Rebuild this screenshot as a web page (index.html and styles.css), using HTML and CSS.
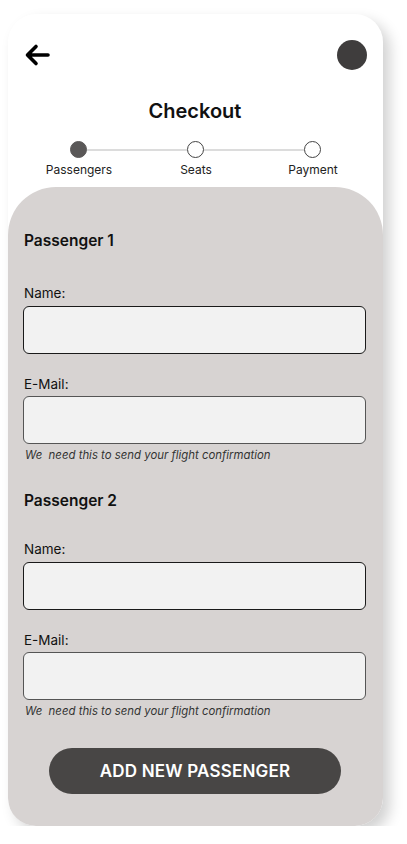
FILE: index.html
```html
<!DOCTYPE html>
<html lang="en">
<head>
  <meta charset="UTF-8" />
  <meta name="viewport" content="width=device-width, initial-scale=1.0" />
  <title>Checkout</title>
  <link rel="stylesheet" href="styles.css">
</head>
<body>
  <div class="phone">
    <div class="topbar">
      <button class="back" aria-label="Back">
        <svg width="26" height="24" viewBox="0 0 26 24">
          <path d="M24 12H4M12 3.5L3.5 12L12 20.5" fill="none" stroke="#000" stroke-width="3.6" stroke-linecap="round" stroke-linejoin="round"/>
        </svg>
      </button>
      <div class="avatar"></div>
    </div>

    <h1 class="title">Checkout</h1>

    <div class="steps">
      <span class="dot active"></span>
      <span class="line"></span>
      <span class="dot"></span>
      <span class="line"></span>
      <span class="dot"></span>
    </div>
    <div class="step-labels">
      <span>Passengers</span>
      <span>Seats</span>
      <span>Payment</span>
    </div>

    <div class="panel">
      <div class="passenger">
        <h2>Passenger 1</h2>
        <label class="field-label">Name:</label>
        <div class="input strong"></div>
        <label class="field-label gap">E-Mail:</label>
        <div class="input"></div>
        <p class="hint">We  need this to send your flight confirmation</p>
      </div>

      <div class="passenger second">
        <h2>Passenger 2</h2>
        <label class="field-label">Name:</label>
        <div class="input strong"></div>
        <label class="field-label gap">E-Mail:</label>
        <div class="input"></div>
        <p class="hint">We  need this to send your flight confirmation</p>
      </div>

      <button class="add-btn">ADD NEW PASSENGER</button>
    </div>
  </div>
</body>
</html>
```

FILE: styles.css
```css
body {
  margin: 0;
  padding: 14px 0 0 8px;
  background: #fff;
  font-family: "Inter", "Noto Sans", sans-serif;
  color: #111;
}
.phone {
  width: 375px;
  height: 812px;
  background: #fff;
  border-radius: 28px;
  box-shadow: 7px 7px 14px rgba(0,0,0,0.18);
  display: flex;
  flex-direction: column;
  overflow: hidden;
}
.topbar {
  display: flex;
  justify-content: space-between;
  align-items: center;
  padding: 26px 16px 0 16px;
}
.back {
  background: none;
  border: none;
  padding: 0;
  width: 28px;
  height: 28px;
  display: flex;
  align-items: center;
  cursor: pointer;
}
.avatar {
  width: 30px;
  height: 30px;
  border-radius: 50%;
  background: #3f3d3d;
}
.title {
  margin: 28px 0 0 0;
  text-align: center;
  font-size: 20px;
  font-weight: 600;
  line-height: 26px;
  padding-right: 1px;
}
.steps {
  display: flex;
  align-items: center;
  padding: 0 62px 0 62px;
  margin-top: 17px;
}
.dot {
  width: 15px;
  height: 15px;
  border-radius: 50%;
  border: 1.3px solid #444;
  background: #fff;
  flex: none;
}
.dot.active {
  background: #5a5858;
  border-color: #5a5858;
}
.line {
  flex: 1;
  height: 2px;
  background: #dcdcdc;
}
.step-labels {
  display: flex;
  justify-content: space-between;
  padding: 0 20px 0 21px;
  margin-top: 4px;
  font-size: 12px;
  line-height: 16px;
  color: #222;
}
.step-labels span {
  width: 100px;
  text-align: center;
}
.panel {
  flex: 1;
  margin-top: 9px;
  background: #d7d3d2;
  border-radius: 48px 48px 26px 26px;
  padding: 44px 17px 0 15px;
  display: flex;
  flex-direction: column;
}
.passenger h2 {
  margin: 0 0 0 1px;
  font-size: 15.5px;
  font-weight: 600;
  line-height: 20px;
  color: #111;
}
.field-label {
  display: block;
  margin: 33px 0 4px 1px;
  font-size: 13.5px;
  line-height: 18px;
  color: #111;
}
.field-label.gap {
  margin-top: 21px;
  margin-bottom: 3px;
}
.input {
  height: 46px;
  background: #f2f2f2;
  border: 1px solid #555;
  border-radius: 6px;
}
.input.strong {
  border-color: #1a1a1a;
}
.hint {
  margin: 4px 0 0 2px;
  font-size: 11.4px;
  font-style: italic;
  line-height: 14px;
  color: #333;
  white-space: pre;
}
.passenger.second {
  margin-top: 29px;
}
.passenger.second .field-label {
  margin-top: 29px;
}
.passenger.second .field-label.gap {
  margin-top: 21px;
}
.add-btn {
  align-self: center;
  margin: 30px 0 0 1px;
  width: 292px;
  height: 46px;
  border: none;
  border-radius: 23px;
  background: #484645;
  color: #fff;
  font-family: "Inter", "Noto Sans", sans-serif;
  font-size: 17px;
  font-weight: 600;
  letter-spacing: 0.2px;
  cursor: pointer;
}
```
